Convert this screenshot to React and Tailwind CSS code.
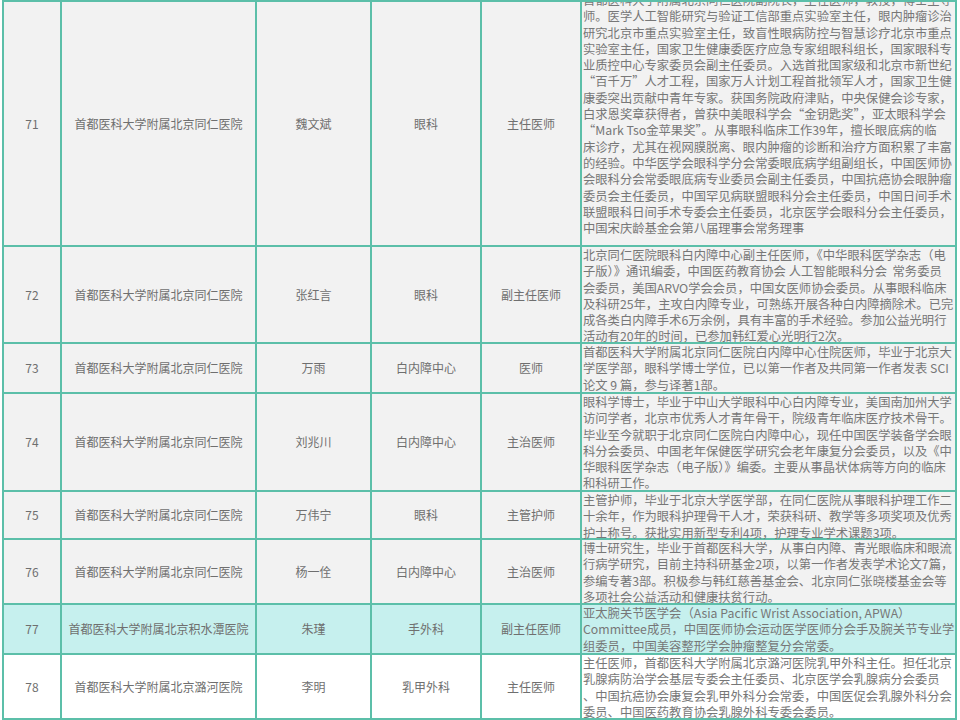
const rows = [
  {
    no: '71', hosp: '首都医科大学附属北京同仁医院', name: '魏文斌', dept: '眼科', title: '主任医师',
    h: 'h-[245px]', bg: 'bg-[#f2f2f2]', shift: '-mt-[10px]',
    bio: [
      '首都医科大学附属北京同仁医院副院长，主任医师，教授，博士生导',
      '师。医学人工智能研究与验证工信部重点实验室主任，眼内肿瘤诊治',
      '研究北京市重点实验室主任，致盲性眼病防控与智慧诊疗北京市重点',
      '实验室主任，国家卫生健康委医疗应急专家组眼科组长，国家眼科专',
      '业质控中心专家委员会副主任委员。入选首批国家级和北京市新世纪',
      '“百千万”人才工程，国家万人计划工程首批领军人才，国家卫生健',
      '康委突出贡献中青年专家。获国务院政府津贴，中央保健会诊专家，',
      '白求恩奖章获得者，曾获中美眼科学会“金钥匙奖”，亚太眼科学会',
      '“Mark Tso金苹果奖”。从事眼科临床工作39年，擅长眼底病的临',
      '床诊疗，尤其在视网膜脱离、眼内肿瘤的诊断和治疗方面积累了丰富',
      '的经验。中华医学会眼科学分会常委眼底病学组副组长，中国医师协',
      '会眼科分会常委眼底病专业委员会副主任委员，中国抗癌协会眼肿瘤',
      '委员会主任委员，中国罕见病联盟眼科分会主任委员，中国日间手术',
      '联盟眼科日间手术专委会主任委员，北京医学会眼科分会主任委员，',
      '中国宋庆龄基金会第八届理事会常务理事',
    ],
  },
  {
    no: '72', hosp: '首都医科大学附属北京同仁医院', name: '张红言', dept: '眼科', title: '副主任医师',
    h: 'h-[97px]', bg: 'bg-[#f2f2f2]', shift: '',
    bio: [
      '北京同仁医院眼科白内障中心副主任医师，《中华眼科医学杂志（电',
      '子版）》通讯编委，中国医药教育协会 人工智能眼科分会  常务委员',
      '会委员，美国ARVO学会会员，中国女医师协会委员。从事眼科临床',
      '及科研25年，主攻白内障专业，可熟练开展各种白内障摘除术。已完',
      '成各类白内障手术6万余例，具有丰富的手术经验。参加公益光明行',
      '活动有20年的时间，已参加韩红爱心光明行2次。',
    ],
  },
  {
    no: '73', hosp: '首都医科大学附属北京同仁医院', name: '万雨', dept: '白内障中心', title: '医师',
    h: 'h-[50px]', bg: 'bg-[#f2f2f2]', shift: '',
    bio: [
      '首都医科大学附属北京同仁医院白内障中心住院医师，毕业于北京大',
      '学医学部，眼科学博士学位，已以第一作者及共同第一作者发表 SCI',
      '论文 9 篇，参与译著1部。',
    ],
  },
  {
    no: '74', hosp: '首都医科大学附属北京同仁医院', name: '刘兆川', dept: '白内障中心', title: '主治医师',
    h: 'h-[98px]', bg: 'bg-[#f2f2f2]', shift: '',
    bio: [
      '眼科学博士，毕业于中山大学眼科中心白内障专业，美国南加州大学',
      '访问学者，北京市优秀人才青年骨干，院级青年临床医疗技术骨干。',
      '毕业至今就职于北京同仁医院白内障中心，现任中国医学装备学会眼',
      '科分会委员、中国老年保健医学研究会老年康复分会委员，以及《中',
      '华眼科医学杂志（电子版）》编委。主要从事晶状体病等方向的临床',
      '和科研工作。',
    ],
  },
  {
    no: '75', hosp: '首都医科大学附属北京同仁医院', name: '万伟宁', dept: '眼科', title: '主管护师',
    h: 'h-[48px]', bg: 'bg-[#f2f2f2]', shift: '',
    bio: [
      '主管护师，毕业于北京大学医学部，在同仁医院从事眼科护理工作二',
      '十余年，作为眼科护理骨干人才，荣获科研、教学等多项奖项及优秀',
      '护士称号。获批实用新型专利4项，护理专业学术课题3项。',
    ],
  },
  {
    no: '76', hosp: '首都医科大学附属北京同仁医院', name: '杨一佺', dept: '白内障中心', title: '主治医师',
    h: 'h-[65px]', bg: 'bg-[#f2f2f2]', shift: '',
    bio: [
      '博士研究生，毕业于首都医科大学，从事白内障、青光眼临床和眼流',
      '行病学研究，目前主持科研基金2项，以第一作者发表学术论文7篇，',
      '参编专著3部。积极参与韩红慈善基金会、北京同仁张晓楼基金会等',
      '多项社会公益活动和健康扶贫行动。',
    ],
  },
  {
    no: '77', hosp: '首都医科大学附属北京积水潭医院', name: '朱瑾', dept: '手外科', title: '副主任医师',
    h: 'h-[50px]', bg: 'bg-[#c6f0ee]', shift: '',
    bio: [
      '亚太腕关节医学会（Asia Pacific Wrist Association, APWA）',
      'Committee成员，中国医师协会运动医学医师分会手及腕关节专业学',
      '组委员，中国美容整形学会肿瘤整复分会常委。',
    ],
  },
  {
    no: '78', hosp: '首都医科大学附属北京潞河医院', name: '李明', dept: '乳甲外科', title: '主任医师',
    h: 'h-[65px]', bg: 'bg-white', shift: '',
    bio: [
      '主任医师，首都医科大学附属北京潞河医院乳甲外科主任。担任北京',
      '乳腺病防治学会基层专委会主任委员、北京医学会乳腺病分会委员',
      '、中国抗癌协会康复会乳甲外科分会常委，中国医促会乳腺外科分会',
      '委员、中国医药教育协会乳腺外科专委会委员。',
    ],
  },
];

export default function App() {
  return (
    <div className="w-[960px] h-[720px] overflow-hidden bg-white pl-[2px]" style={{ fontFamily: '"Noto Sans CJK SC", "Noto Sans", sans-serif' }}>
      <table className="border-collapse table-fixed w-[955px] text-[#6f6f6f]">
        <colgroup>
          <col className="w-[58px]" />
          <col className="w-[195px]" />
          <col className="w-[115px]" />
          <col className="w-[110px]" />
          <col className="w-[100px]" />
          <col />
        </colgroup>
        <tbody>
          {rows.map((r) => (
            <tr key={r.no} className={`${r.bg} ${r.h}`}>
              <td className="border-2 border-[#5cbfa9] text-center text-[12px] whitespace-nowrap p-0">{r.no}</td>
              <td className="border-2 border-[#5cbfa9] text-center text-[12px] whitespace-nowrap p-0">{r.hosp}</td>
              <td className="border-2 border-[#5cbfa9] text-center text-[12px] whitespace-nowrap p-0">{r.name}</td>
              <td className="border-2 border-[#5cbfa9] text-center text-[12px] whitespace-nowrap p-0">{r.dept}</td>
              <td className="border-2 border-[#5cbfa9] text-center text-[12px] whitespace-nowrap p-0">{r.title}</td>
              <td className="border-2 border-[#5cbfa9] p-0 align-top">
                <div className={`${r.h} overflow-hidden -mb-[4px]`}>
                  <div className={`${r.shift} pl-[1px] text-[12.3px] leading-[16.3px] text-[#777]`}>
                    {r.bio.map((l, i) => (
                      <div key={i} className="whitespace-pre">{l}</div>
                    ))}
                  </div>
                </div>
              </td>
            </tr>
          ))}
        </tbody>
      </table>
    </div>
  );
}
